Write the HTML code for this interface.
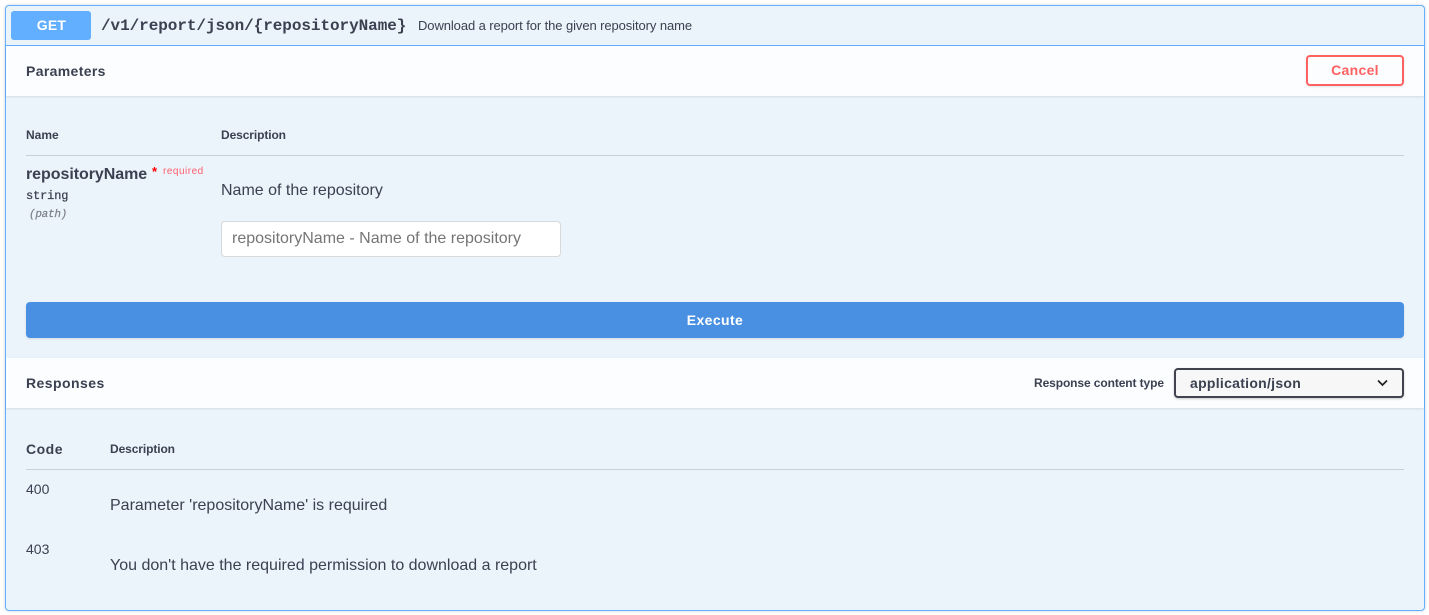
<!DOCTYPE html>
<html lang="en">
<head>
<meta charset="utf-8">
<title>GET /v1/report/json/{repositoryName}</title>
<style>
html,body{margin:0;padding:0;background:#fff;width:1429px;height:615px;overflow:hidden}
body{position:relative;font-family:"Liberation Sans",Arial,sans-serif;color:#3b4151}
.a{position:absolute;white-space:nowrap}
.card{position:absolute;left:5px;top:5px;width:1418px;height:604px;border:1px solid #61affe;border-radius:4px;background:#ebf3fb;box-shadow:0 0 3px rgba(0,0,0,.19)}
.band{position:absolute;left:6px;width:1418px;background:#fcfdfe;box-shadow:0 1px 2px rgba(0,0,0,.1)}
.line{position:absolute;height:1px;background:rgba(59,65,81,.2)}
.b{font-weight:700}
</style>
</head>
<body>
<div class="card"></div>
<div class="a" style="left:6px;top:45px;width:1418px;height:1px;background:#61affe"></div>
<div class="band" style="top:46px;height:50px"></div>
<div class="band" style="top:358px;height:50px"></div>

<div class="a b" style="left:11px;top:11px;width:80px;height:29px;line-height:29px;background:#61affe;border-radius:3px;color:#fff;text-align:center;font-size:14px;letter-spacing:.2px;text-indent:1px">GET</div>
<div class="a b" style="left:101px;top:16px;line-height:20px;font-family:'Liberation Mono',monospace;font-size:16px;letter-spacing:-.06px">/v1/report/json/{repositoryName}</div>
<div class="a" style="left:418px;top:17px;line-height:18px;font-size:13px;letter-spacing:-.09px">Download a report for the given repository name</div>

<div class="a b" style="left:26px;top:62px;line-height:18px;font-size:14px;letter-spacing:.35px">Parameters</div>
<div class="a b" style="left:1306px;top:55px;width:94px;height:27px;line-height:27px;border:2px solid #ff6060;border-radius:4px;background:#fcfdfe;color:#ff6060;text-align:center;font-size:14px;letter-spacing:.3px;box-shadow:0 1px 2px rgba(0,0,0,.1)">Cancel</div>

<div class="a b" style="left:26px;top:127px;line-height:16px;font-size:12px">Name</div>
<div class="a b" style="left:221px;top:127px;line-height:16px;font-size:12px;letter-spacing:-.1px">Description</div>
<div class="line" style="left:26px;top:155px;width:1378px"></div>

<div class="a b" style="left:26px;top:165px;line-height:20px;font-size:16px;letter-spacing:-.05px">repositoryName</div>
<div class="a b" style="left:152px;top:165px;line-height:14px;font-size:13px;color:#f00">*</div>
<div class="a" style="left:163px;top:165px;line-height:14px;font-size:10px;letter-spacing:.5px;color:#ff5f6b">required</div>
<div class="a b" style="left:26px;top:189px;line-height:15px;font-family:'Liberation Mono',monospace;font-size:12px;font-weight:400;letter-spacing:-.15px;-webkit-text-stroke:.25px #3b4151">string</div>
<div class="a" style="left:29px;top:208px;line-height:15px;font-family:'Liberation Mono',monospace;font-size:11px;letter-spacing:-.27px;font-style:italic;color:#7d7f87;-webkit-text-stroke:.2px #7d7f87">(path)</div>

<div class="a" style="left:221px;top:181px;line-height:19px;font-size:16px">Name of the repository</div>
<div class="a" style="left:221px;top:221px;width:338px;height:34px;line-height:34px;border:1px solid #d9d9d9;border-radius:4px;background:#fff;color:#757575;font-size:16px;text-indent:10px">repositoryName - Name of the repository</div>

<div class="a b" style="left:26px;top:302px;width:1378px;height:36px;line-height:36px;background:#4990e2;border-radius:4px;color:#fff;text-align:center;font-size:14px;letter-spacing:.4px;box-shadow:0 1px 2px rgba(0,0,0,.1)">Execute</div>

<div class="a b" style="left:26px;top:374px;line-height:18px;font-size:14px;letter-spacing:.45px">Responses</div>
<div class="a b" style="left:1034px;top:375px;line-height:16px;font-size:12px;letter-spacing:-.1px">Response content type</div>
<div class="a b" style="left:1174px;top:368px;width:226px;height:26px;line-height:26px;border:2px solid #41444e;border-radius:4px;background:#f7f7f7;font-size:14px;letter-spacing:.28px;text-indent:14px;box-shadow:0 1px 2px rgba(0,0,0,.2)">application/json</div>
<svg class="a" style="left:1376px;top:378px" width="13" height="10" viewBox="0 0 13 10"><path d="M2 2.5 L6.5 7 L11 2.5" fill="none" stroke="#222" stroke-width="1.7"/></svg>

<div class="a b" style="left:26px;top:440px;line-height:18px;font-size:14px;letter-spacing:.5px">Code</div>
<div class="a b" style="left:110px;top:441px;line-height:16px;font-size:12px;letter-spacing:-.1px">Description</div>
<div class="line" style="left:26px;top:469px;width:1378px"></div>

<div class="a" style="left:26px;top:481px;line-height:16px;font-size:14px">400</div>
<div class="a" style="left:110px;top:496px;line-height:19px;font-size:16px">Parameter 'repositoryName' is required</div>
<div class="a" style="left:26px;top:541px;line-height:16px;font-size:14px">403</div>
<div class="a" style="left:110px;top:556px;line-height:19px;font-size:16px">You don't have the required permission to download a report</div>
</body>
</html>
